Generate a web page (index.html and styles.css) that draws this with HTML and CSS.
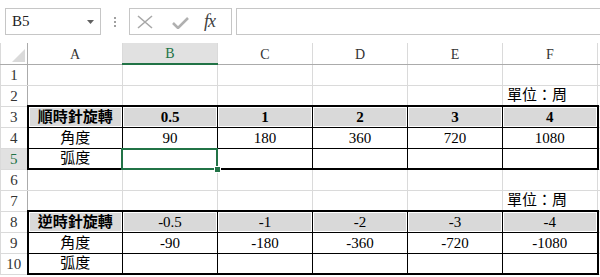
FILE: index.html
```
<!DOCTYPE html>
<html lang="zh-Hant">
<head>
    <meta charset="UTF-8">
    <title>旋轉 - 工作表</title>
    <link rel="stylesheet" href="styles.css">
</head>
<body>
<div class="formula-bar">
    <div class="name-box">
        <span>B5</span>
        <svg class="caret" width="7" height="4" viewBox="0 0 7 4"><polygon points="0,0 7,0 3.5,4" fill="#606060"/></svg>
    </div>
    <div class="grip">
        <svg width="2" height="10" viewBox="0 0 2 10"><rect x="0" y="0" width="2" height="2" fill="#a0a0a0"/><rect x="0" y="4" width="2" height="2" fill="#a0a0a0"/><rect x="0" y="8" width="2" height="2" fill="#a0a0a0"/></svg>
    </div>
    <div class="fx-buttons">
        <svg class="btn-cancel" width="16" height="14" viewBox="0 0 16 14"><path d="M1 1 L15 13 M15 1 L1 13" stroke="#a8a8a8" stroke-width="1.6" fill="none"/></svg>
        <svg class="btn-enter" width="17" height="12" viewBox="0 0 17 12"><path d="M1 6 L6 11 L16 1" stroke="#b0b0b0" stroke-width="2.6" fill="none"/></svg>
        <span class="fx">fx</span>
    </div>
    <div class="formula-input"></div>
</div>

<table class="sheet">
    <colgroup>
        <col class="c-head">
        <col class="c-cell"><col class="c-cell"><col class="c-cell">
        <col class="c-cell"><col class="c-cell"><col class="c-cell">
        <col class="c-rest">
    </colgroup>
    <thead>
    <tr>
        <th class="corner">
            <svg width="13" height="13" viewBox="0 0 13 13"><polygon points="13,0 13,13 0,13" fill="#dadada"/></svg>
        </th>
        <th>A</th>
        <th class="is-active">B</th>
        <th>C</th>
        <th>D</th>
        <th>E</th>
        <th>F</th>
        <th></th>
    </tr>
    </thead>
    <tbody>
    <tr>
        <th>1</th>
        <td></td><td></td><td></td><td></td><td></td><td></td><td></td>
    </tr>
    <tr>
        <th>2</th>
        <td></td><td></td><td></td><td></td><td></td><td class="left">單位：周</td><td></td>
    </tr>
    <tr class="label-row">
        <th>3</th>
        <td class="t t-top t-left strong">順時針旋轉</td>
        <td class="t t-top strong">0.5</td>
        <td class="t t-top strong">1</td>
        <td class="t t-top strong">2</td>
        <td class="t t-top strong">3</td>
        <td class="t t-top t-right strong">4</td>
        <td></td>
    </tr>
    <tr>
        <th>4</th>
        <td class="t t-left">角度</td>
        <td class="t">90</td>
        <td class="t">180</td>
        <td class="t">360</td>
        <td class="t">720</td>
        <td class="t t-right">1080</td>
        <td></td>
    </tr>
    <tr>
        <th class="is-active">5</th>
        <td class="t t-bottom t-left">弧度</td>
        <td class="t t-bottom selected"><div class="selection"><span class="handle"></span></div></td>
        <td class="t t-bottom"></td>
        <td class="t t-bottom"></td>
        <td class="t t-bottom"></td>
        <td class="t t-bottom t-right"></td>
        <td></td>
    </tr>
    <tr>
        <th>6</th>
        <td></td><td></td><td></td><td></td><td></td><td></td><td></td>
    </tr>
    <tr>
        <th>7</th>
        <td></td><td></td><td></td><td></td><td></td><td class="left">單位：周</td><td></td>
    </tr>
    <tr class="label-row">
        <th>8</th>
        <td class="t t-top t-left strong">逆時針旋轉</td>
        <td class="t t-top">-0.5</td>
        <td class="t t-top">-1</td>
        <td class="t t-top">-2</td>
        <td class="t t-top">-3</td>
        <td class="t t-top t-right">-4</td>
        <td></td>
    </tr>
    <tr>
        <th>9</th>
        <td class="t t-left">角度</td>
        <td class="t">-90</td>
        <td class="t">-180</td>
        <td class="t">-360</td>
        <td class="t">-720</td>
        <td class="t t-right">-1080</td>
        <td></td>
    </tr>
    <tr>
        <th>10</th>
        <td class="t t-bottom t-left">弧度</td>
        <td class="t t-bottom"></td>
        <td class="t t-bottom"></td>
        <td class="t t-bottom"></td>
        <td class="t t-bottom"></td>
        <td class="t t-bottom t-right"></td>
        <td></td>
    </tr>
    </tbody>
</table>
</body>
</html>
```

FILE: styles.css
```
body {
    margin: 0;
    background: #fff;
    overflow: hidden;
    height: 277px;
    font-family: "Liberation Serif", "Noto Sans CJK TC", serif;
    color: #000;
}

/* 上方的資料編輯列 */
.formula-bar {
    display: flex;
    align-items: flex-start;
    height: 43px;
    padding: 8px 0 0 5px;
    box-sizing: border-box;
}

.name-box {
    width: 96px;
    height: 27px;
    box-sizing: border-box;
    border: 1px solid #c6c6c6;
    display: flex;
    align-items: center;
    justify-content: space-between;
    padding: 0 6px 0 6px;
    font-size: 15px;
    color: #222;
}

.grip {
    width: 28px;
    height: 27px;
    display: flex;
    align-items: center;
    justify-content: center;
}

.fx-buttons {
    width: 103px;
    height: 27px;
    box-sizing: border-box;
    border: 1px solid #c6c6c6;
    display: flex;
    align-items: center;
    padding-left: 7px;
}

.btn-cancel {
    margin-right: 19px;
}

.btn-enter {
    margin-top: 2px;
    margin-right: 15px;
}

.fx {
    font-style: italic;
    font-size: 18px;
    color: #404040;
    letter-spacing: -1px;
}

.formula-input {
    width: 364px;
    height: 27px;
    box-sizing: border-box;
    border: 1px solid #c6c6c6;
    border-right: none;
    margin-left: 4px;
}

/* 工作表 */
.sheet {
    border-collapse: collapse;
    table-layout: fixed;
    width: 600px;
    font-size: 15px;
}

.c-head { width: 27px; }
.c-cell { width: 95px; }
.c-rest { width: 3px; }

.sheet tr {
    height: 21px;
}

.sheet th,
.sheet td {
    padding: 0 3px 1px;
    line-height: 17px;
    vertical-align: bottom;
    white-space: nowrap;
    overflow: hidden;
}

.sheet th {
    font-weight: normal;
    font-size: 15px;
    color: #333;
    border: 1px solid #dadada;
    border-right-color: #ababab;
}

.sheet thead th {
    border-top: none;
    border-bottom: 1px solid #ababab;
    border-right-color: #dadada;
    font-size: 14px;
}

.sheet thead th.corner {
    border-right-color: #ababab;
    vertical-align: bottom;
    text-align: right;
    padding: 0 2px 2px 0;
    line-height: 0;
}

.sheet th.is-active {
    background: #e1e1e1;
    color: #217346;
}

.sheet thead th.is-active {
    border-bottom: 2px solid #217346;
}

.sheet td {
    border: 1px solid #dadada;
    text-align: center;
}

.sheet td.left {
    text-align: left;
    padding-left: 4px;
}

.sheet tr > :last-child {
    padding: 0;
}

/* 表格範圍框線 */
.sheet td.t { border: 1px solid #000; }
.sheet td.t-top { border-top: 2px solid #000; }
.sheet td.t-bottom { border-bottom: 2px solid #000; }
.sheet td.t-left { border-left: 2px solid #000; }
.sheet td.t-right { border-right: 2px solid #000; }

.label-row td.t {
    background: #d9d9d9;
    box-shadow: inset 0 0 0 1px #fff;
}

.strong {
    font-weight: bold;
}

.sheet td.selected {
    position: relative;
    overflow: visible;
}

.selection {
    position: absolute;
    left: -2px;
    top: -1px;
    right: -1px;
    bottom: -2px;
    border: 2px solid #217346;
}

.handle {
    position: absolute;
    right: -5px;
    bottom: -5px;
    width: 5px;
    height: 5px;
    background: #217346;
    border: 1px solid #fff;
}
```
